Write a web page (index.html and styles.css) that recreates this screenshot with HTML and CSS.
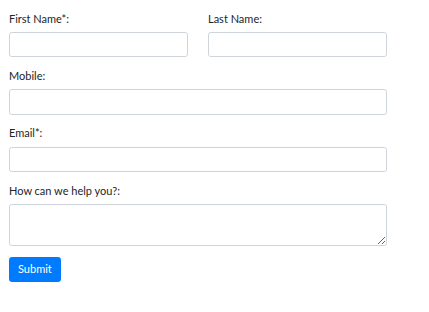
FILE: index.html
```html
<!DOCTYPE html>
<html>
<head>
<meta charset="utf-8">
<link rel="stylesheet" href="styles.css">
</head>
<body>
<form class="contact-form">
  <div class="row">
    <div class="form-group col">
      <label class="field-label">First Name*:</label>
      <input class="form-control" type="text">
    </div>
    <div class="form-group col">
      <label class="field-label">Last Name:</label>
      <input class="form-control" type="text">
    </div>
  </div>
  <div class="form-group">
    <label class="field-label">Mobile:</label>
    <input class="form-control" type="text">
  </div>
  <div class="form-group">
    <label class="field-label">Email*:</label>
    <input class="form-control" type="email">
  </div>
  <div class="form-group">
    <label class="field-label">How can we help you?:</label>
    <textarea class="form-control form-textarea"></textarea>
  </div>
  <button type="button" class="btn-submit">Submit</button>
</form>
</body>
</html>
```

FILE: styles.css
```css
html, body {
  margin: 0;
  padding: 0;
  background: #ffffff;
}
body {
  font-family: "Lato", "Open Sans", sans-serif;
  font-size: 11px;
  line-height: 16px;
  color: #212529;
}
.contact-form {
  width: 378px;
  padding: 10.67px 0 0 9px;
}
.row {
  display: flex;
  gap: 20px;
}
.col {
  flex: 1 1 0;
  min-width: 0;
}
.form-group {
  margin-bottom: 10.67px;
}
.field-label {
  display: block;
  margin-bottom: 5.33px;
}
.form-control {
  display: block;
  box-sizing: border-box;
  width: 100%;
  height: 25.33px;
  margin: 0;
  padding: 4px 8px;
  font: inherit;
  color: #495057;
  background: #fff;
  border: 1px solid #ced4da;
  border-radius: 2.67px;
  outline: none;
}
.form-textarea {
  height: 42px;
  resize: vertical;
}
.btn-submit {
  display: block;
  box-sizing: border-box;
  height: 25.33px;
  padding: 0 8px;
  font: inherit;
  color: #fff;
  background: #007bff;
  border: 1px solid #007bff;
  border-radius: 2.67px;
}
```
